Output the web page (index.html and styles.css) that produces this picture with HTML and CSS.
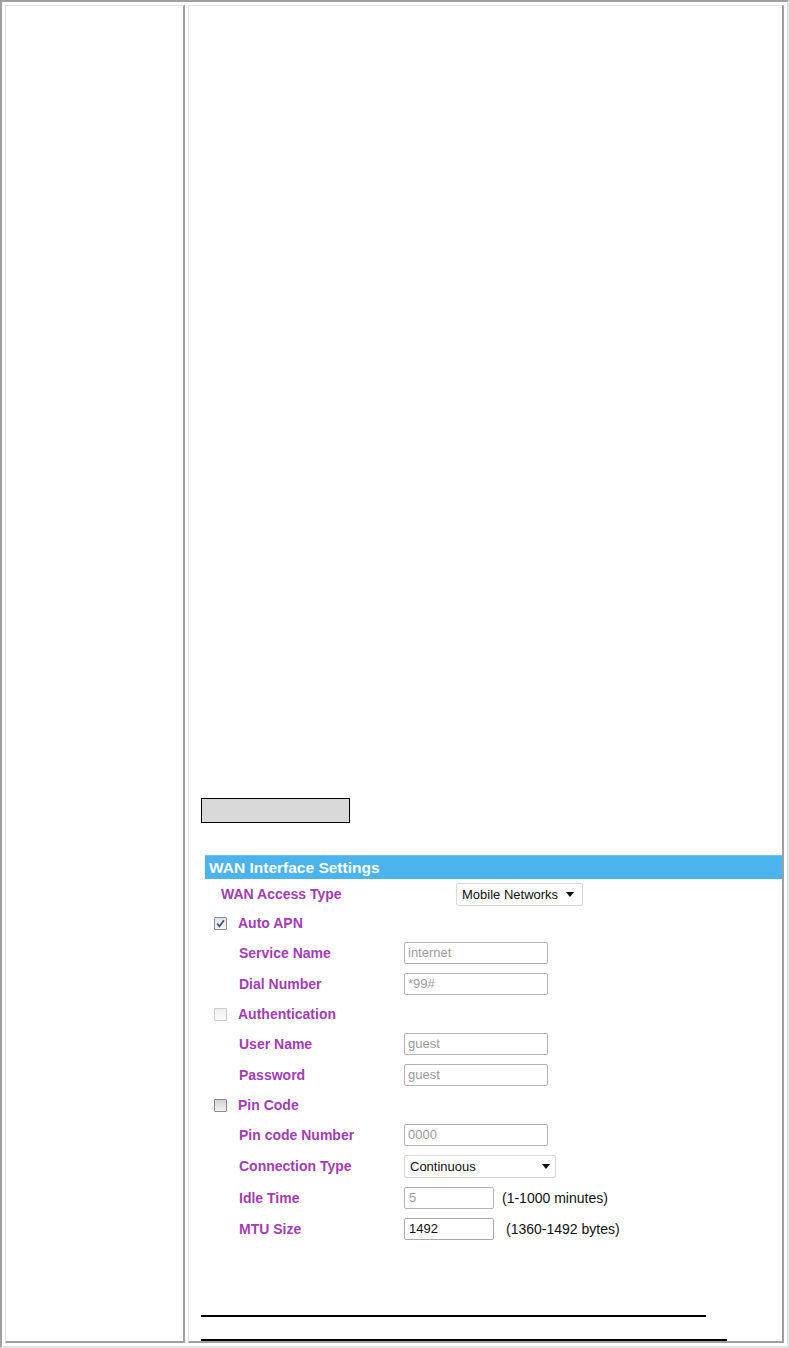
FILE: index.html
```html
<!DOCTYPE html>
<html>
<head>
<meta charset="utf-8">
<title>WAN Interface Settings</title>
<link rel="stylesheet" href="styles.css">
</head>
<body>
<table class="frame">
  <tr>
    <td class="side"></td>
    <td class="main">
      <div class="blank"></div>
      <div class="placeholder"></div>
      <div class="panel">
        <div class="panel-head">WAN Interface Settings</div>
        <div class="row head-row">
          <span class="label top">WAN Access Type</span>
          <span class="select wide"><span class="sel-text">Mobile Networks</span><svg class="arrow" width="8" height="5" viewBox="0 0 8 5"><polygon points="0,0 8,0 4,5" fill="#111"/></svg></span>
        </div>
        <div class="row check-row">
          <span class="check checked"><svg width="11" height="11" viewBox="0 0 11 11"><path d="M2.2 5.6 L4.5 8.4 L8.9 2.2" fill="none" stroke="#3e4f8a" stroke-width="1.7"/></svg></span>
          <span class="label">Auto APN</span>
        </div>
        <div class="row">
          <span class="label sub">Service Name</span>
          <span class="input dim">internet</span>
        </div>
        <div class="row">
          <span class="label sub">Dial Number</span>
          <span class="input dim">*99#</span>
        </div>
        <div class="row check-row">
          <span class="check light"></span>
          <span class="label">Authentication</span>
        </div>
        <div class="row">
          <span class="label sub">User Name</span>
          <span class="input dim">guest</span>
        </div>
        <div class="row">
          <span class="label sub">Password</span>
          <span class="input dim">guest</span>
        </div>
        <div class="row check-row">
          <span class="check shaded"></span>
          <span class="label">Pin Code</span>
        </div>
        <div class="row">
          <span class="label sub">Pin code Number</span>
          <span class="input dim">0000</span>
        </div>
        <div class="row">
          <span class="label sub">Connection Type</span>
          <span class="select conn"><span class="sel-text">Continuous</span><svg class="arrow" width="8" height="5" viewBox="0 0 8 5"><polygon points="0,0 8,0 4,5" fill="#111"/></svg></span>
        </div>
        <div class="row">
          <span class="label sub">Idle Time</span>
          <span class="input dim short">5</span>
          <span class="note">(1-1000 minutes)</span>
        </div>
        <div class="row">
          <span class="label sub">MTU Size</span>
          <span class="input short">1492</span>
          <span class="note far">(1360-1492 bytes)</span>
        </div>
      </div>
      <div class="rule one"></div>
      <div class="rule two"></div>
    </td>
  </tr>
</table>
</body>
</html>
```

FILE: styles.css
```css
html, body {
  margin: 0;
  padding: 0;
  background: #ffffff;
}

body {
  font-family: "Liberation Sans", Arial, sans-serif;
}

.frame {
  width: 789px;
  height: 1348px;
  border-collapse: separate;
  border-spacing: 3px;
  border-style: solid;
  border-width: 2px;
  border-color: #a0a0a0 #e3e3e3 #e3e3e3 #a0a0a0;
  box-sizing: border-box;
}

.frame td {
  vertical-align: top;
  padding: 0;
  border-style: solid;
  border-width: 1px 2px 2px 1px;
  border-color: #e3e3e3 #a0a0a0 #a0a0a0 #e3e3e3;
}

.side {
  width: 177px;
}

.main {
  width: 593px;
}

.blank {
  height: 792px;
}

.placeholder {
  margin-left: 12px;
  width: 147px;
  height: 23px;
  background: #d9d9d9;
  border: 1px solid #000;
}

.panel {
  margin-top: 32px;
  margin-left: 16px;
}

.panel-head {
  height: 24px;
  line-height: 24px;
  background: #4bb4ef;
  border-top: 1px solid #6cc3f2;
  box-sizing: border-box;
  color: #ffffff;
  font-weight: bold;
  font-size: 15.5px;
  padding-left: 4px;
}

.row {
  display: flex;
  align-items: center;
  height: 31.5px;
}

.row.head-row {
  height: 30px;
}

.row.check-row {
  height: 28px;
}

.label {
  color: #a23db4;
  font-weight: bold;
  font-size: 14px;
  white-space: nowrap;
}

.label.top {
  margin-left: 16px;
  width: 235px;
}

.label.sub {
  margin-left: 34px;
  width: 165px;
}

.check {
  width: 13px;
  height: 13px;
  box-sizing: border-box;
  margin-left: 9px;
  margin-right: 11px;
  border: 1px solid #9a9a9a;
  border-radius: 1px;
  display: flex;
  align-items: center;
  justify-content: center;
}

.check.checked {
  background: linear-gradient(#e4e4e4, #f8f8f8);
  border-color: #8e8e8e;
}

.check.light {
  border-color: #c9c9c9;
  background: linear-gradient(#f0f0f0, #fbfbfb);
}

.check.shaded {
  border-color: #8a8a8a;
  background: linear-gradient(#d2d2d2, #f3f3f3);
}

.input {
  box-sizing: border-box;
  width: 144px;
  height: 22px;
  border: 1px solid #a9a9a9;
  border-radius: 2px;
  padding-left: 3px;
  font-size: 13px;
  line-height: 20px;
  color: #111;
  background: #fff;
}

.input.dim {
  color: #9c9c9c;
  border-color: #b4b4b4;
}

.input.short {
  width: 90px;
  padding-left: 4px;
}

.note {
  font-size: 14px;
  color: #111;
  margin-left: 8px;
}

.note.far {
  margin-left: 12px;
}

.select {
  box-sizing: border-box;
  height: 23px;
  border: 1px solid #d9d9d9;
  border-radius: 2px;
  background: #fff;
  display: flex;
  align-items: center;
  justify-content: space-between;
  padding: 0 8px 0 5px;
  font-size: 13px;
  color: #111;
}

.select.wide {
  width: 127px;
}

.select.conn {
  width: 152px;
  padding: 0 5px 0 5px;
}

.rule {
  height: 2px;
  background: #000;
  margin-left: 12px;
}

.rule.one {
  width: 505px;
  margin-top: 70px;
}

.rule.two {
  width: 526px;
  margin-top: 22px;
}
```
